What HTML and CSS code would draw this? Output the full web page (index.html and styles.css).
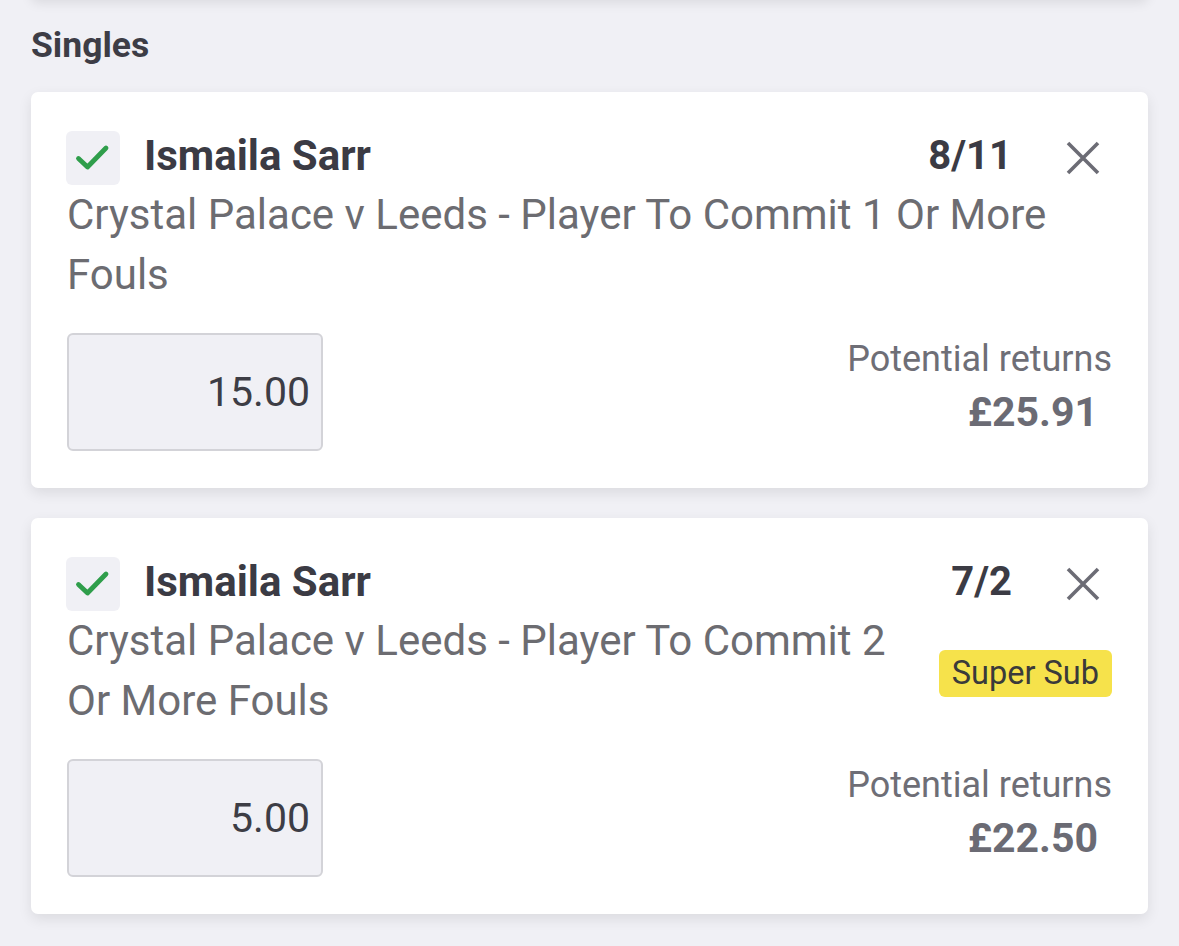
FILE: index.html
```html
<!DOCTYPE html>
<html>
<head>
<meta charset="utf-8">
<link rel="stylesheet" href="styles.css">
</head>
<body>
<div class="page">
  <div class="prev-card"></div>
  <h2 class="section-title">Singles</h2>

  <div class="card">
    <div class="head">
      <span class="check"><svg viewBox="0 0 54 54" width="54" height="54"><path d="M12.5 27.5 L21.5 36 L40 17" fill="none" stroke="#2f9e4b" stroke-width="4.8" stroke-linecap="round" stroke-linejoin="round"/></svg></span>
      <span class="name">Ismaila Sarr</span>
      <span class="odds">8/11</span>
      <span class="close"><svg viewBox="0 0 34 34" width="34" height="34"><path d="M2 2 L32 32 M32 2 L2 32" stroke="#6c6c75" stroke-width="3.6" stroke-linecap="butt"/></svg></span>
    </div>
    <div class="desc-row">
      <div class="desc">Crystal Palace v Leeds - Player To Commit 1 Or More Fouls</div>
    </div>
    <div class="stake-row">
      <div class="stake">15.00</div>
      <div class="returns">
        <div class="returns-label">Potential returns</div>
        <div class="returns-value">£25.91</div>
      </div>
    </div>
  </div>

  <div class="card">
    <div class="head">
      <span class="check"><svg viewBox="0 0 54 54" width="54" height="54"><path d="M12.5 27.5 L21.5 36 L40 17" fill="none" stroke="#2f9e4b" stroke-width="4.8" stroke-linecap="round" stroke-linejoin="round"/></svg></span>
      <span class="name">Ismaila Sarr</span>
      <span class="odds">7/2</span>
      <span class="close"><svg viewBox="0 0 34 34" width="34" height="34"><path d="M2 2 L32 32 M32 2 L2 32" stroke="#6c6c75" stroke-width="3.6" stroke-linecap="butt"/></svg></span>
    </div>
    <div class="desc-row">
      <div class="desc">Crystal Palace v Leeds - Player To Commit 2 Or More Fouls</div>
      <span class="badge">Super Sub</span>
    </div>
    <div class="stake-row">
      <div class="stake">5.00</div>
      <div class="returns">
        <div class="returns-label">Potential returns</div>
        <div class="returns-value">£22.50</div>
      </div>
    </div>
  </div>
</div>
</body>
</html>
```

FILE: styles.css
```css
html, body {
  margin: 0;
  padding: 0;
  background: #f0f0f5;
}
body {
  font-family: Roboto, "Liberation Sans", Arial, sans-serif;
  color: #3b3b44;
}
.page {
  padding: 0 31px 40px;
}
.prev-card {
  height: 20px;
  margin-top: -20px;
  background: #ffffff;
  border-radius: 0 0 6px 6px;
  box-shadow: 0 3px 12px rgba(0, 0, 0, 0.09);
}
.section-title {
  margin: 25px 0 27px;
  font-size: 35.5px;
  line-height: 40px;
  font-weight: 700;
  color: #3d3d46;
}
.card {
  background: #ffffff;
  border-radius: 7px;
  box-shadow: 0 5px 14px rgba(0, 0, 0, 0.09);
  padding: 39px 36px 37px 36px;
  margin-bottom: 30px;
}
.head {
  display: flex;
  align-items: center;
  height: 54px;
}
.check {
  width: 54px;
  height: 54px;
  border-radius: 6px;
  background: #f0f0f5;
  display: flex;
  margin-left: -1px;
  margin-right: 24px;
  flex: none;
}
.name {
  flex: 1;
  font-size: 42px;
  line-height: 49px;
  padding-bottom: 6px;
  font-weight: 700;
  color: #3b3b44;
}
.odds {
  font-size: 40px;
  line-height: 49px;
  padding-bottom: 6px;
  font-weight: 700;
  color: #3b3b44;
}
.close {
  display: flex;
  margin-left: 54px;
  margin-right: 12px;
}
.desc-row {
  display: flex;
  align-items: center;
}
.desc {
  flex: 1;
  font-size: 42px;
  line-height: 60px;
  color: #6c6c71;
}
.badge {
  margin-left: 24px;
  margin-top: 4px;
  background: #f6e24b;
  border-radius: 6px;
  padding: 0 13px;
  height: 47px;
  line-height: 47px;
  font-size: 32.5px;
  color: #3a3a3a;
  flex: none;
}
.stake-row {
  display: flex;
  justify-content: space-between;
  align-items: flex-start;
  margin-top: 28px;
}
.stake {
  width: 241px;
  height: 114px;
  padding-right: 11px;
  border: 2px solid #d3d3d8;
  border-radius: 6px;
  background: #f0f0f5;
  display: flex;
  align-items: center;
  justify-content: flex-end;
  font-size: 41px;
  color: #3d3d45;
}
.returns {
  display: flex;
  flex-direction: column;
  align-items: flex-end;
  padding-top: 3px;
}
.returns-label {
  font-size: 36px;
  line-height: 46px;
  color: #6e6e76;
}
.returns-value {
  font-size: 41px;
  line-height: 60px;
  font-weight: 700;
  color: #6b6b74;
  margin-right: 14px;
}
```
